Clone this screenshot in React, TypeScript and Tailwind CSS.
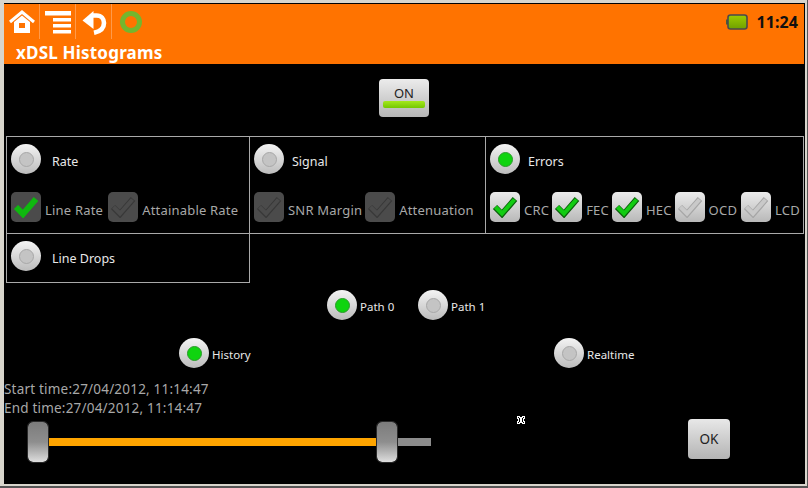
import React from "react";

const font = { fontFamily: '"Noto Sans", "Open Sans", sans-serif' };

const cursorRows = ["111..111", "1.1111.1", "11.11.11", ".1.11.1.", ".1.11.1.", "11.11.11", "1.1111.1", "111..111"];

function Radio({ on }: { on?: boolean }) {
  return (
    <span className="flex h-[30px] w-[30px] shrink-0 items-center justify-center rounded-full bg-gradient-to-b from-[#f4f4f4] to-[#bcbcbc]">
      {on ? (
        <span className="h-[15px] w-[15px] rounded-full border border-[#2a9a2a] bg-[#0fd40f]" />
      ) : (
        <span className="h-[15px] w-[15px] rounded-full border border-[#a8a8a8] bg-[#c4c4c4]" />
      )}
    </span>
  );
}

function Tick({ color, edge }: { color: string; edge: string }) {
  return (
    <svg width="26" height="22" viewBox="0 0 26 22" fill="none">
      <path d="M3 11 L10 18 L23 3" stroke={edge} strokeWidth="6" />
      <path d="M3.5 11 L10 17.5 L22.5 3.5" stroke={color} strokeWidth="4" />
    </svg>
  );
}

function Check({ mode }: { mode: "on" | "off" | "dimOn" | "dimOff" }) {
  const bg =
    mode === "dimOn" || mode === "dimOff"
      ? "bg-[#4b4b4b]"
      : "bg-gradient-to-b from-[#ececec] to-[#b8b8b8]";
  const tick =
    mode === "on" ? (
      <Tick color="#12cc12" edge="#0b5e0b" />
    ) : mode === "dimOn" ? (
      <Tick color="#0fb80f" edge="#0fb80f" />
    ) : mode === "off" ? (
      <Tick color="#c9c9c9" edge="#a6a6a6" />
    ) : (
      <Tick color="#4b4b4b" edge="#383838" />
    );
  return (
    <span className={`flex h-[30px] w-[30px] shrink-0 items-center justify-center rounded-[5px] ${bg}`}>
      {tick}
    </span>
  );
}

function HeadRow({ label, on, gap }: { label: string; on?: boolean; gap: string }) {
  return (
    <div className="flex items-center">
      <Radio on={on} />
      <span className={`pt-[7px] text-[12.5px] text-[#e8e8e8] ${gap}`}>{label}</span>
    </div>
  );
}

function CheckItem({ label, mode, gap, next }: { label: string; mode: "on" | "off" | "dimOn" | "dimOff"; gap: string; next: string }) {
  return (
    <div className={`flex items-center ${next}`}>
      <Check mode={mode} />
      <span className={`pt-[8px] text-[13px] tracking-[0.2px] text-[#a8a8a8] ${gap}`}>{label}</span>
    </div>
  );
}

function Thumb() {
  return (
    <span className="z-10 h-[40px] w-[20px] shrink-0 rounded-[5px] bg-gradient-to-b from-[#7c7c7c] via-[#8e8e8e] to-[#dedede] outline outline-1 outline-[#2a2a2a]" />
  );
}

export default function App() {
  return (
    <div style={font} className="flex h-[488px] w-[808px] flex-col overflow-hidden border-b-2 border-r border-[#555] bg-[#d8d5cc] pb-[2px] pl-[4px] pr-[2px] pt-[3px]">
      <div className="flex min-h-0 flex-1 flex-col border-r border-t border-black">
        <header className="relative h-[60px] shrink-0 bg-[#ff7300]">
          <div className="flex h-[35px] items-center">
            <div className="flex h-[35px] w-[36px] items-center justify-center border-r border-[#ff9a4a]">
              <svg width="26" height="24" viewBox="0 0 26 24" fill="none">
                <path d="M1 12 L13 2 L25 12" stroke="#fff" strokeWidth="3" />
                <path fillRule="evenodd" clipRule="evenodd" d="M5 12 L13 5.5 L21 12 V23 H5 Z M10 13 V18 H16 V13 Z" fill="#fff" />
              </svg>
            </div>
            <div className="flex h-[35px] w-[36px] items-center justify-center border-r border-[#ff9a4a]">
              <svg width="26" height="24" viewBox="0 0 26 24" fill="#fff">
                <rect x="0" y="1" width="26" height="4.5" />
                <rect x="8" y="8" width="18" height="3.5" />
                <rect x="8" y="14" width="18" height="3.5" />
                <rect x="8" y="20" width="18" height="3.5" />
              </svg>
            </div>
            <div className="flex h-[35px] w-[36px] items-center justify-center border-r border-[#ff9a4a]">
              <svg width="26" height="27" viewBox="0 0 26 27" fill="none">
                <path d="M11 7.5 H15.5 C20.5 7.5 23 11 23 15 C23 20 19 23.5 13 24.8" stroke="#fff" strokeWidth="4.6" />
                <path d="M1.5 12.5 L12.5 3 V21 Z" fill="#fff" />
              </svg>
            </div>
            <div className="flex h-[35px] w-[37px] items-center justify-center">
              <span className="h-[22px] w-[22px] rounded-full border-[5px] border-[#74b62e]" />
            </div>
            <div className="ml-auto flex items-center pr-[6px]">
              <svg width="22" height="16" viewBox="0 0 22 16" className="mr-[8px]">
                <defs>
                  <linearGradient id="batt" x1="0" y1="0" x2="0" y2="1">
                    <stop offset="0" stopColor="#9ccc00" />
                    <stop offset="1" stopColor="#6fa000" />
                  </linearGradient>
                </defs>
                <rect x="0" y="5.5" width="2.5" height="5" fill="#4a5a3a" />
                <rect x="2" y="1" width="19" height="14" rx="2.5" fill="url(#batt)" stroke="#4a4a4a" strokeWidth="1.6" />
              </svg>
              <span className="text-[16px] font-bold leading-none tracking-[0.1px] text-[#101010]">11:24</span>
            </div>
          </div>
          <h1 className="pl-[12px] pt-[3px] text-[17px] font-bold leading-[22px] tracking-[0.2px] text-white">xDSL Histograms</h1>
        </header>

        <main className="relative flex min-h-0 flex-1 flex-col bg-black">
          <div className="flex justify-center pt-[15px]">
            <button className="flex h-[38px] w-[50px] flex-col items-center rounded-[4px] bg-gradient-to-b from-[#ececec] to-[#b6b6b6] pt-[6px]">
              <span className="text-[13px] leading-[16px] text-[#222]">ON</span>
              <span className="h-[7px] w-[42px] rounded-[2px] bg-gradient-to-b from-[#a4e81c] to-[#74c800]" />
            </button>
          </div>

          <div className="ml-[2px] mt-[19px] w-[798px]">
            <div className="flex h-[98px] border border-[#a9a9a9]">
              <div className="flex w-[243px] shrink-0 flex-col border-r border-[#a9a9a9] pl-[4px] pt-[7px]">
                <HeadRow label="Rate" gap="ml-[11px]" />
                <div className="mt-[18px] flex">
                  <CheckItem label="Line Rate" mode="dimOn" gap="ml-[4px]" next="" />
                  <CheckItem label="Attainable Rate" mode="dimOff" gap="ml-[4px]" next="ml-[5px]" />
                </div>
              </div>
              <div className="flex w-[236px] shrink-0 flex-col border-r border-[#a9a9a9] pl-[4px] pt-[7px]">
                <HeadRow label="Signal" gap="ml-[8px]" />
                <div className="mt-[18px] flex">
                  <CheckItem label="SNR Margin" mode="dimOff" gap="ml-[4px]" next="" />
                  <CheckItem label="Attenuation" mode="dimOff" gap="ml-[4px]" next="ml-[3px]" />
                </div>
              </div>
              <div className="flex min-w-0 flex-1 flex-col pl-[4px] pt-[7px]">
                <HeadRow label="Errors" on gap="ml-[8px]" />
                <div className="mt-[18px] flex">
                  <CheckItem label="CRC" mode="on" gap="ml-[4px]" next="" />
                  <CheckItem label="FEC" mode="on" gap="ml-[4px]" next="ml-[3px]" />
                  <CheckItem label="HEC" mode="on" gap="ml-[4px]" next="ml-[3px]" />
                  <CheckItem label="OCD" mode="off" gap="ml-[4px]" next="ml-[3px]" />
                  <CheckItem label="LCD" mode="off" gap="ml-[4px]" next="ml-[4px]" />
                </div>
              </div>
            </div>
            <div className="h-[49px] w-[244px] border-x border-b border-[#a9a9a9] pl-[4px] pt-[7px]">
              <HeadRow label="Line Drops" gap="ml-[11px]" />
            </div>
          </div>

          <div className="mt-[7px] flex pl-[323px]">
            <div className="flex w-[91px] items-center">
              <Radio on />
              <span className="ml-[3px] pt-[4px] text-[11.5px] text-[#e8e8e8]">Path 0</span>
            </div>
            <div className="flex items-center">
              <Radio />
              <span className="ml-[3px] pt-[4px] text-[11.5px] text-[#e8e8e8]">Path 1</span>
            </div>
          </div>

          <div className="mt-[18px] flex pl-[175px]">
            <div className="flex w-[375px] items-center">
              <Radio on />
              <span className="ml-[3px] pt-[4px] text-[11.5px] text-[#e8e8e8]">History</span>
            </div>
            <div className="flex items-center">
              <Radio />
              <span className="ml-[3px] pt-[4px] text-[11.5px] text-[#e8e8e8]">Realtime</span>
            </div>
          </div>

          <div className="mt-[12px] text-[13.5px] leading-[19px] tracking-[0.2px] text-[#a8a8a8]">
            <div>Start time:27/04/2012, 11:14:47</div>
            <div>End time:27/04/2012, 11:14:47</div>
          </div>

          <div className="flex items-start pl-[24px]">
            <div className="mt-[4px] flex h-[40px] w-[403px] items-center">
              <Thumb />
              <span className="h-[8px] w-[329px] bg-[#ffa500]" />
              <Thumb />
              <span className="h-[8px] w-[34px] bg-[#8c8c8c]" />
            </div>
            <button className="ml-[257px] mt-[1px] h-[40px] w-[42px] rounded-[4px] bg-gradient-to-b from-[#e8e8e8] to-[#b4b4b4] text-[13.5px] text-[#222]">
              OK
            </button>
          </div>

          <svg width="8" height="8" viewBox="0 0 8 8" shapeRendering="crispEdges" className="absolute left-[513px] top-[352px]">
            {cursorRows.map((row, y) =>
              row.split("").map((c, x) => (c === "1" ? <rect key={`${x}-${y}`} x={x} y={y} width="1" height="1" fill="#fff" /> : null))
            )}
          </svg>
        </main>
      </div>
    </div>
  );
}
